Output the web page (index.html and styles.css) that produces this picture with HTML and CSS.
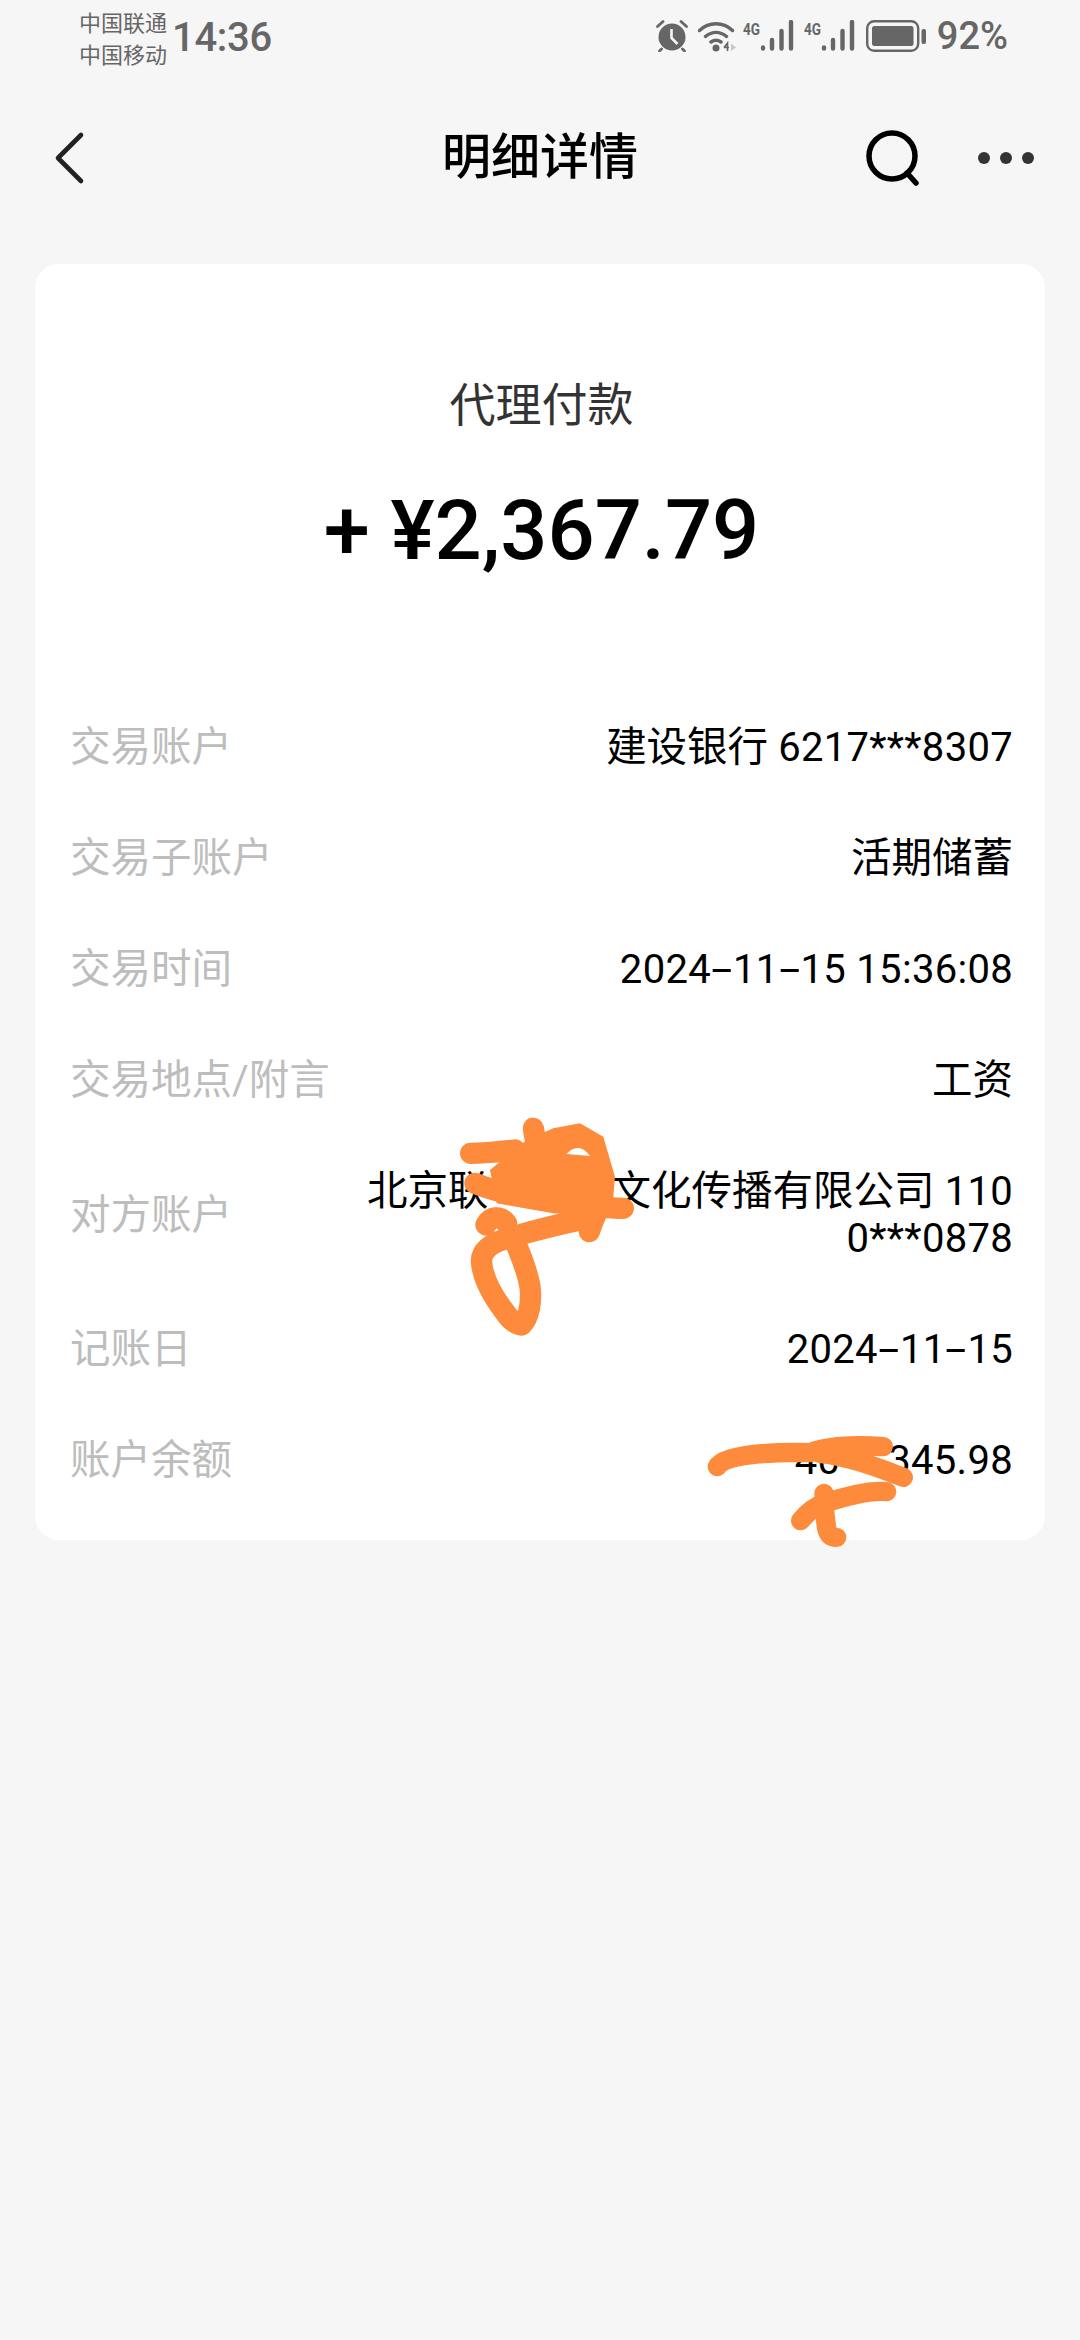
FILE: index.html
```html
<!DOCTYPE html>
<html lang="zh-CN">
<head>
    <meta charset="UTF-8">
    <meta name="viewport" content="width=device-width, initial-scale=1.0">
    <title>明细详情</title>
    <link rel="stylesheet" href="styles.css">
</head>
<body>
    <div class="screen">
        <div class="status-bar">
            <div class="carriers">
                <span>中国联通</span>
                <span>中国移动</span>
            </div>
            <span class="clock">14:36</span>
            <div class="status-icons">
                <svg class="ic-alarm" width="32" height="32" viewBox="0 0 32 32">
                    <circle cx="16" cy="17" r="13.5" fill="#666"/>
                    <path d="M15.5 9v9l6 6" fill="none" stroke="#f6f6f6" stroke-width="2.6"/>
                    <path d="M1.5 6.5 7 1.5M30.500 6.500 25 1.500M5.500 29 3.500 31M26.500 29 28.500 31" fill="none" stroke="#666" stroke-width="2.800" stroke-linecap="round"/>
                </svg>
                <svg class="ic-wifi" width="38" height="32" viewBox="0 0 38 32">
                    <path d="M1.500 10.500C11 1.500 25 1.500 34.500 10.500M7.500 16.500C14 11 22 11 28.500 16.500M13 22c3.500-2.500 6.500-2.500 10 0" fill="none" stroke="#666" stroke-width="3.400" stroke-linecap="round"/>
                    <circle cx="18" cy="28" r="3.500" fill="#666"/>
                    <path d="M26 27.500 29.500 23v8M26 27.500h5" fill="none" stroke="#666" stroke-width="1.600"/>
                    <path d="M33 23.500 38 27.500 33 31z" fill="#c8c8c8"/>
                </svg>
                <div class="signal">
                    <span class="net">4G</span>
                    <svg width="34" height="32" viewBox="0 0 34 32">
                        <path d="M3 27.500v1M12 20v8.500M21.500 11v17.500M31 2v26.500" fill="none" stroke="#666" stroke-width="4.400" stroke-linecap="round"/>
                    </svg>
                </div>
                <div class="signal">
                    <span class="net">4G</span>
                    <svg width="34" height="32" viewBox="0 0 34 32">
                        <path d="M3 27.500v1M12 20v8.500M21.500 11v17.500M31 2v26.500" fill="none" stroke="#666" stroke-width="4.400" stroke-linecap="round"/>
                    </svg>
                </div>
                <svg class="ic-battery" width="60" height="32" viewBox="0 0 60 32">
                    <rect x="1.200" y="1.200" width="51" height="29.600" rx="7" fill="none" stroke="#666" stroke-width="2.400"/>
                    <rect x="6" y="6" width="41.500" height="20" rx="2.500" fill="#666"/>
                    <rect x="55.500" y="9" width="4.500" height="15" rx="2" fill="#666"/>
                </svg>
                <span class="percent">92%</span>
            </div>
        </div>

        <div class="nav-bar">
            <svg class="nav-back" width="32" height="54" viewBox="0 0 32 54">
                <path d="M28 4 5 27l23 23" fill="none" stroke="#222" stroke-width="4.600" stroke-linecap="round" stroke-linejoin="round"/>
            </svg>
            <h1 class="nav-title">明细详情</h1>
            <svg class="nav-search" width="56" height="56" viewBox="0 0 56 56">
                <circle cx="27" cy="26" r="23" fill="none" stroke="#000" stroke-width="5.500"/>
                <path d="M42 43 51 53" fill="none" stroke="#000" stroke-width="5.500" stroke-linecap="round"/>
            </svg>
            <div class="nav-more"><i></i><i></i><i></i></div>
        </div>

        <div class="card">
            <div class="summary">
                <div class="summary-type">代理付款</div>
                <div class="summary-amount">+ ¥2,367.79</div>
            </div>
            <div class="row">
                <span class="row-label">交易账户</span>
                <span class="row-value">建设银行 <span class="num">6217***8307</span></span>
            </div>
            <div class="row">
                <span class="row-label">交易子账户</span>
                <span class="row-value">活期储蓄</span>
            </div>
            <div class="row">
                <span class="row-label">交易时间</span>
                <span class="row-value"><span class="num">2024<span class="dash">-</span>11<span class="dash">-</span>15 15:36:08</span></span>
            </div>
            <div class="row">
                <span class="row-label">交易地点/附言</span>
                <span class="row-value">工资</span>
            </div>
            <div class="row">
                <span class="row-label">对方账户</span>
                <span class="row-value">北京联<span class="hidden-name"></span>文化传播有限公司 <span class="num">110<br>0***0878</span></span>
            </div>
            <div class="row">
                <span class="row-label">记账日</span>
                <span class="row-value"><span class="num">2024<span class="dash">-</span>11<span class="dash">-</span>15</span></span>
            </div>
            <div class="row">
                <span class="row-label">账户余额</span>
                <span class="row-value"><span class="num">40<span class="hidden-digits"></span>345.98</span></span>
            </div>
        </div>

        <!-- hand-drawn redaction marks on top of the screenshot -->
        <svg class="scribbles" width="1080" height="2340" viewBox="0 0 1080 2340">
            <g transform="translate(340 1090) scale(0.3333)" fill="none" stroke="#fd8b3b" stroke-width="64" stroke-linecap="round" stroke-linejoin="round">
                <path fill="#fd8b3b" stroke="none" fill-rule="evenodd" d="M450 240 560 150 640 115 720 100 790 140 825 260 815 380 640 370 470 340ZM680 192C700 170 725 165 750 198Z"/>
                <path d="M392 190C430 190 480 185 525 180"/>
                <path d="M580 115C585 140 590 170 595 200"/>
                <path d="M405 280C480 310 560 325 650 335 720 345 790 355 850 355"/>
                <path d="M770 370C760 390 755 405 748 425"/>
                <path d="M438 405C450 380 480 375 500 400"/>
                <path d="M745 385C670 400 590 420 520 440 460 455 420 480 425 520 430 570 460 620 490 660 510 690 530 705 545 705 570 680 575 630 570 590 560 530 535 480 515 430"/>
            </g>
            <g transform="translate(680 1400) scale(0.3333)" fill="none" stroke="#fd8b3b" stroke-width="58" stroke-linecap="round" stroke-linejoin="round">
                <path d="M112 200C130 165 260 155 390 158 450 135 540 135 610 140M420 160C510 170 600 205 670 232"/>
                <path d="M620 275C560 270 480 295 430 310 400 320 380 340 362 362M432 280C432 320 436 360 440 385 445 405 455 412 470 412"/>
            </g>
        </svg>
    </div>
</body>
</html>
```

FILE: styles.css
```css
* {
    box-sizing: border-box;
}

body {
    margin: 0;
    background-color: #f6f6f6;
    font-family: Roboto, "Noto Sans CJK SC", sans-serif;
}

.screen {
    position: relative;
    width: 1080px;
    height: 2340px;
    overflow: hidden;
}

/* status bar */
.status-bar {
    display: flex;
    align-items: flex-start;
    height: 80px;
    padding: 8px 72px 0 79px;
    color: #666;
}

.carriers {
    display: flex;
    flex-direction: column;
    font-size: 22px;
    line-height: 32px;
    width: 93px;
}

.clock {
    font-size: 40px;
    font-weight: 500;
    line-height: 54px;
    margin-top: 3px;
    letter-spacing: -0.3px;
}

.status-icons {
    display: flex;
    align-items: flex-start;
    margin-left: auto;
    margin-top: 12px;
}

.ic-wifi {
    margin-left: 10px;
}

.signal {
    display: flex;
    margin-left: 7px;
}

.signal + .signal {
    margin-left: 10px;
}

.net {
    font-size: 17px;
    font-weight: 700;
    line-height: 18px;
    width: 18px;
    transform: scaleX(0.8);
    transform-origin: left top;
    margin-right: -1px;
}

.ic-battery {
    margin-left: 11px;
}

.percent {
    width: 82px;
    font-size: 38px;
    font-weight: 500;
    line-height: 36px;
    margin-top: -2px;
    text-align: right;
}

/* nav bar */
.nav-bar {
    position: relative;
    display: flex;
    align-items: center;
    height: 156px;
    padding: 0 46px 0 53px;
}

.nav-title {
    position: absolute;
    top: 46px;
    left: 0;
    right: 0;
    margin: 0;
    text-align: center;
    font-size: 49px;
    font-weight: 500;
    line-height: 64px;
    color: #000;
}

.nav-search {
    margin-left: auto;
    transform: translateX(1px);
}

.nav-more {
    display: flex;
    gap: 10px;
    margin-left: 58px;
}

.nav-more i {
    display: block;
    width: 12px;
    height: 12px;
    border-radius: 50%;
    background-color: #333;
}

/* card */
.card {
    margin: 28px 35px 0;
    padding: 0 32px 27px 35px;
    height: 1276px;
    border-radius: 24px;
    background-color: #fff;
}

.summary {
    height: 428px;
    padding-top: 107px;
    text-align: center;
}

.summary-type {
    font-size: 46px;
    line-height: 68px;
    color: #333;
}

.summary-amount {
    margin-top: 40px;
    font-size: 83px;
    font-weight: 500;
    line-height: 104px;
    color: #000;
}

.row {
    display: flex;
    align-items: center;
    justify-content: space-between;
    padding: 32px 0;
    font-size: 40.5px;
    line-height: 47px;
}

.row-label {
    color: #bdbdbd;
    white-space: nowrap;
}

.row-value {
    color: #000;
    text-align: right;
}

.num {
    font-size: 40px;
    letter-spacing: 0.3px;
}

/* the hyphen in dates is drawn long in the original font */
.dash {
    display: inline-block;
    width: 22px;
    text-align: center;
    transform: scaleX(1.9);
}

.hidden-name {
    display: inline-block;
    width: 122px;
}

.hidden-digits {
    display: inline-block;
    width: 48px;
}

.scribbles {
    position: absolute;
    top: 0;
    left: 0;
    pointer-events: none;
}
```
